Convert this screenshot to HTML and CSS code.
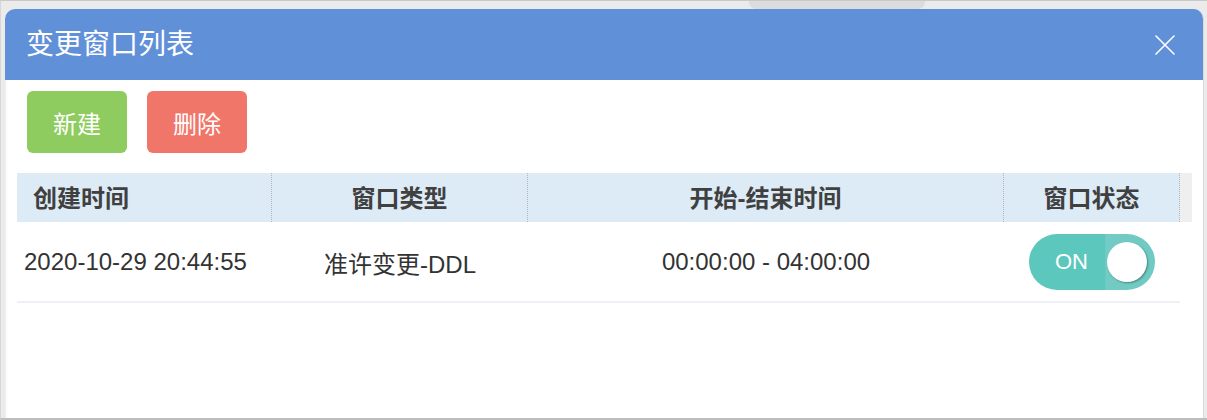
FILE: index.html
```html
<!DOCTYPE html>
<html lang="zh-CN">
<head>
<meta charset="utf-8">
<title>变更窗口列表</title>
<link rel="stylesheet" href="styles.css">
</head>
<body>
<div class="frame">
  <div class="topbar"><div class="tab"></div></div>
  <div class="modal">
    <div class="modal-header">
      <div class="modal-title">变更窗口列表</div>
      <svg class="close" width="20" height="20" viewBox="0 0 20 20" aria-hidden="true">
        <path d="M1 1 L19 19 M19 1 L1 19" stroke="#ffffff" stroke-width="1.6" fill="none" stroke-linecap="round"/>
      </svg>
    </div>
    <div class="modal-body">
      <div class="toolbar">
        <button class="btn btn-new">新建</button>
        <button class="btn btn-del">删除</button>
      </div>
      <div class="table">
        <div class="thead">
          <div class="th th-left">创建时间</div>
          <div class="th">窗口类型</div>
          <div class="th">开始-结束时间</div>
          <div class="th">窗口状态</div>
          <div class="gutter"></div>
        </div>
        <div class="tr">
          <div class="td td-left">2020-10-29 20:44:55</div>
          <div class="td">准许变更-DDL</div>
          <div class="td">00:00:00 - 04:00:00</div>
          <div class="td">
            <div class="switch"><span class="switch-label">ON</span><span class="knob"></span></div>
          </div>
        </div>
      </div>
    </div>
  </div>
</div>
</body>
</html>
```
FILE: styles.css
```css
html, body {
  margin: 0;
  padding: 0;
}
body {
  height: 420px;
  overflow: hidden;
  background: #ebebeb;
  font-family: "Liberation Sans", "Noto Sans CJK SC", sans-serif;
}
.frame {
  height: 420px;
  box-sizing: border-box;
  border-top: 1px solid #c9c9c9;
  border-bottom: 2px solid #bdbdbd;
  border-left: 1px solid #d6d6d6;
  display: flex;
  flex-direction: column;
}
.topbar {
  height: 8px;
  flex: none;
  padding-left: 748px;
}
.tab {
  width: 176px;
  height: 8px;
  background: #dcdcdc;
  border-radius: 0 0 7px 7px;
}
.modal {
  flex: 1;
  margin-left: 4px;
  margin-right: 3px;
  background: #ffffff;
  border-radius: 10px 10px 0 0;
  border-right: 1px solid #d9d9d9;
  box-shadow: inset 2px 0 2px -1px #ececec;
  overflow: hidden;
  display: flex;
  flex-direction: column;
}
.modal-header {
  height: 71px;
  flex: none;
  background: #5f90d8;
  display: flex;
  align-items: center;
  justify-content: space-between;
  padding: 0 28px 0 21px;
}
.modal-title {
  color: #ffffff;
  font-size: 28px;
  line-height: 1;
  letter-spacing: 0;
}
.close {
  display: block;
  margin-top: 1px;
}
.modal-body {
  padding: 11px 11px 0 12px;
}
.toolbar {
  display: flex;
  gap: 20px;
  padding-left: 10px;
}
.btn {
  width: 100px;
  height: 62px;
  border: none;
  border-radius: 6px;
  color: #ffffff;
  font-family: "Liberation Sans", "Noto Sans CJK SC", sans-serif;
  font-size: 24px;
  padding: 0;
  cursor: pointer;
}
.btn-new {
  background: #8fcc60;
}
.btn-del {
  background: #f1766a;
}
.table {
  margin-top: 20px;
}
.thead {
  display: grid;
  grid-template-columns: 255px 256px 476px 176px 12px;
  height: 49px;
  background: #dcebf5;
}
.th {
  display: flex;
  align-items: center;
  justify-content: center;
  font-size: 24px;
  font-weight: 700;
  color: #404040;
  border-right: 1px dotted #b5b5b5;
  padding-bottom: 3px;
}
.th-left {
  justify-content: flex-start;
  padding-left: 16px;
}
.gutter {
  background: #efefef;
}
.tr {
  display: grid;
  grid-template-columns: 255px 256px 476px 176px;
  width: 1163px;
  height: 81px;
  box-sizing: border-box;
  border-bottom: 2px solid #eef1f6;
}
.td {
  display: flex;
  align-items: center;
  justify-content: center;
  font-size: 24px;
  color: #333333;
  padding-top: 1px;
}
.td-left {
  justify-content: flex-start;
  padding-left: 7px;
}
.switch {
  width: 126px;
  height: 56px;
  border-radius: 28px;
  background: linear-gradient(90deg, #5cc7bd 0%, #5cc7bd 60%, #72cbc4 61%, #6ecac2 100%);
  display: flex;
  align-items: center;
  justify-content: space-between;
  padding: 0 8px 0 26px;
  box-sizing: border-box;
}
.switch-label {
  color: #ffffff;
  font-size: 22px;
  line-height: 1;
}
.knob {
  width: 40px;
  height: 40px;
  border-radius: 50%;
  background: #ffffff;
  box-shadow: 1px 1px 2px rgba(0, 0, 0, 0.35);
}
```
